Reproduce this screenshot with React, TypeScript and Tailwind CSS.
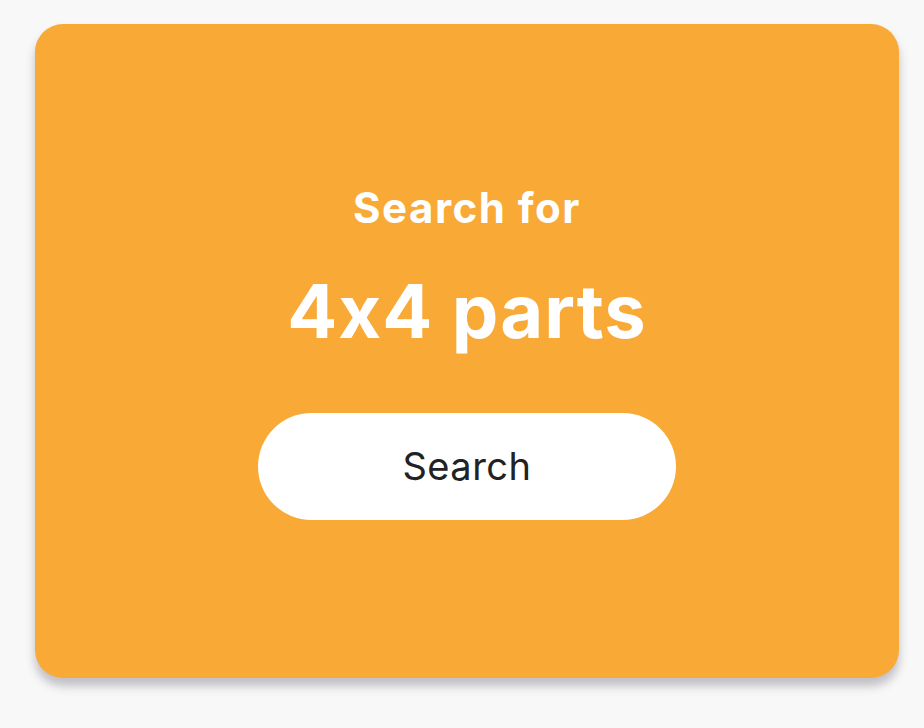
export default function App() {
  return (
    <div className="min-h-[728px] w-[924px] bg-[#f8f8f8] pt-[24px] pl-[35px] font-['Inter',sans-serif]">
      <div className="flex h-[654px] w-[864px] flex-col items-center rounded-[28px] bg-[#f9a935] pt-[163px] shadow-[0_8px_10px_rgba(60,60,80,0.3)]">
        <h2 className="text-[42px] font-bold leading-none tracking-[1.5px] text-white">Search for</h2>
        <h1 className="mt-[45px] text-[74px] font-bold leading-none tracking-[1px] text-white">4x4 parts</h1>
        <button
          type="button"
          className="mt-[65px] flex h-[107px] w-[418px] items-center justify-center rounded-full bg-white text-[38px] tracking-[0.5px] text-[#222]"
        >
          Search
        </button>
      </div>
    </div>
  );
}
